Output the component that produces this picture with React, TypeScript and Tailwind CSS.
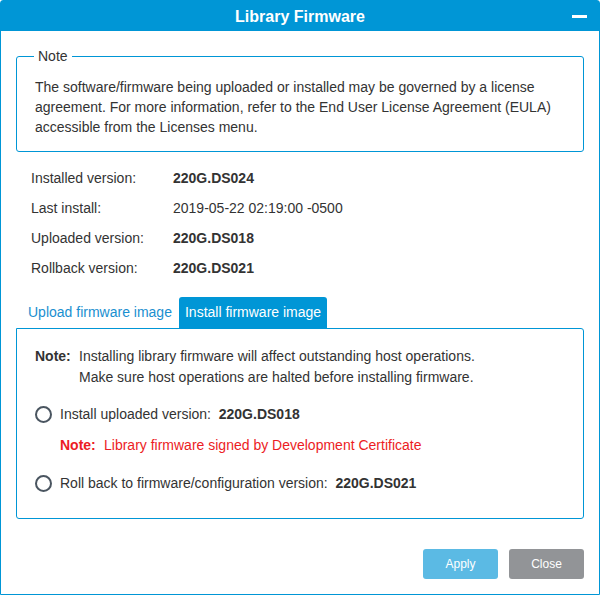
import React, { useState } from "react";

const rows: { label: string; value: string; bold: boolean }[] = [
  { label: "Installed version:", value: "220G.DS024", bold: true },
  { label: "Last install:", value: "2019-05-22 02:19:00 -0500", bold: false },
  { label: "Uploaded version:", value: "220G.DS018", bold: true },
  { label: "Rollback version:", value: "220G.DS021", bold: true },
];

const Radio = ({ checked, onClick }: { checked: boolean; onClick: () => void }) => (
  <button
    onClick={onClick}
    className="w-[17px] h-[17px] rounded-full border-2 border-[#4a5560] bg-white flex items-center justify-center shrink-0"
  >
    {checked && <span className="w-[7px] h-[7px] rounded-full bg-[#4a5560]" />}
  </button>
);

export default function App() {
  const [tab, setTab] = useState<"upload" | "install">("install");
  const [choice, setChoice] = useState<null | "upload" | "rollback">(null);

  return (
    <div
      className="w-[600px] h-[595px] bg-white border border-[#0096d6] rounded-t-[3px] flex flex-col text-[14px] text-[#333]"
      style={{ fontFamily: '"Liberation Sans", Arial, sans-serif' }}
    >
      {/* title bar */}
      <div className="h-[30px] bg-[#0096d6] relative flex items-center justify-center shrink-0">
        <span className="text-white font-bold text-[16px] mt-[1px]">Library Firmware</span>
        <span className="absolute right-[12px] top-[14px] w-[15px] h-[3px] bg-white" />
      </div>

      <div className="px-[15px] pt-[18px] flex flex-col">
        {/* note box */}
        <fieldset className="border border-[#0096d6] rounded-[3px] pl-[18px] pr-4 pb-[14px] pt-[13px]">
          <legend className="px-[4px] ml-[-1px] leading-[15px] text-[14px] text-[#333]">Note</legend>
          <p className="leading-[20px]">
            The software/firmware being uploaded or installed may be governed by a license
            agreement. For more information, refer to the End User License Agreement (EULA)
            accessible from the Licenses menu.
          </p>
        </fieldset>

        {/* versions */}
        <div className="pl-[15px] pt-[11px] flex flex-col">
          {rows.map((r) => (
            <div key={r.label} className="h-[30px] flex items-center">
              <span className="w-[142px]">{r.label}</span>
              <span className={r.bold ? "font-bold" : ""}>{r.value}</span>
            </div>
          ))}
        </div>

        {/* tabs */}
        <div className="flex items-end mt-[14px] pl-[6px] gap-[1px]">
          <button
            onClick={() => setTab("upload")}
            className={
              tab === "upload"
                ? "h-[31px] px-[6px] bg-[#0096d6] text-white rounded-t-[3px] text-[14px]"
                : "h-[31px] px-[6px] text-[#1a8fd0] text-[14px]"
            }
          >
            Upload firmware image
          </button>
          <button
            onClick={() => setTab("install")}
            className={
              tab === "install"
                ? "h-[31px] px-[6px] bg-[#0096d6] text-white rounded-t-[3px] text-[14px]"
                : "h-[31px] px-[6px] text-[#1a8fd0] text-[14px]"
            }
          >
            Install firmware image
          </button>
        </div>

        <div className="border border-[#0096d6] rounded-b-[3px] rounded-tr-[3px] h-[191px] pl-[18px] pt-[17px]">
          {tab === "install" ? (
            <div className="flex flex-col">
              <div className="flex leading-[21px]">
                <span className="font-bold w-[44px]">Note:</span>
                <span>
                  Installing library firmware will affect outstanding host operations.
                  <br />
                  Make sure host operations are halted before installing firmware.
                </span>
              </div>
              <div className="flex items-center gap-[8px] mt-[16px] h-[20px]">
                <Radio checked={choice === "upload"} onClick={() => setChoice("upload")} />
                <span>
                  Install uploaded version:&nbsp; <span className="font-bold">220G.DS018</span>
                </span>
              </div>
              <div className="pl-[25px] mt-[11px] h-[20px] leading-[20px] text-[#ec1c24] flex">
                <span className="font-bold w-[44px]">Note:</span>
                <span>Library firmware signed by Development Certificate</span>
              </div>
              <div className="flex items-center gap-[8px] mt-[18px] h-[20px]">
                <Radio checked={choice === "rollback"} onClick={() => setChoice("rollback")} />
                <span>
                  Roll back to firmware/configuration version:&nbsp;{" "}
                  <span className="font-bold">220G.DS021</span>
                </span>
              </div>
            </div>
          ) : (
            <div>Select a firmware image file to upload.</div>
          )}
        </div>

        {/* buttons */}
        <div className="flex justify-end gap-[11px] mt-[30px]">
          <button className="w-[75px] h-[30px] rounded-[3px] bg-[#5bbae4] text-white text-[12px]">
            Apply
          </button>
          <button className="w-[75px] h-[30px] rounded-[3px] bg-[#929497] text-white text-[12px]">
            Close
          </button>
        </div>
      </div>
    </div>
  );
}
